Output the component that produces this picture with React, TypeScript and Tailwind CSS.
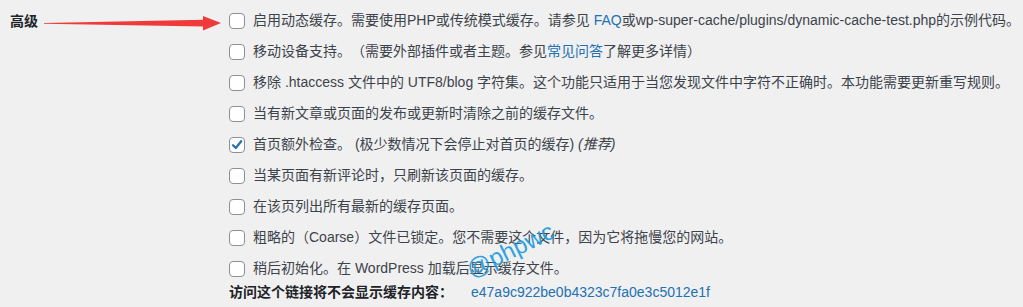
import React from "react";

const font = { fontFamily: '"Liberation Sans", "Noto Sans CJK SC", sans-serif' };

function Box({ checked = false }: { checked?: boolean }) {
  return (
    <span className="mr-2 flex h-4 w-4 shrink-0 items-center justify-center rounded-[4px] border border-[#8c8f94] bg-white">
      {checked && (
        <svg width="14" height="14" viewBox="0 0 14 14">
          <path d="M3 7.2 L5.8 10 L11.2 3.2" fill="none" stroke="#2271b1" strokeWidth="2.2" strokeLinecap="round" strokeLinejoin="round" />
        </svg>
      )}
    </span>
  );
}

function Row({ checked, children }: { checked?: boolean; children: React.ReactNode }) {
  return (
    <div className="flex h-[31px] items-center">
      <Box checked={checked} />
      <span className="whitespace-nowrap">{children}</span>
    </div>
  );
}

const A = ({ children }: { children: React.ReactNode }) => (
  <span className="text-[#2271b1]">{children}</span>
);

export default function App() {
  return (
    <div
      className="relative h-[307px] w-[1023px] overflow-hidden bg-[#f0f0f1] text-[14px] text-[#3c434a] [text-spacing-trim:space-all]"
      style={font}
    >
      <div className="flex">
        <div className="w-[229px] shrink-0 pl-[10px] pt-[12px] text-[14px] font-bold leading-[18px] text-[#1d2327]">高级</div>
        <div className="flex flex-col pt-[5px]">
          <Row>
            启用动态缓存。需要使用PHP或传统模式缓存。请参见 <A>FAQ</A>或wp-super-cache/plugins/dynamic-cache-test.php的示例代码。
          </Row>
          <Row>
            移动设备支持。（需要外部插件或者主题。参见<A>常见问答</A>了解更多详情）
          </Row>
          <Row>移除 .htaccess 文件中的 UTF8/blog 字符集。这个功能只适用于当您发现文件中字符不正确时。本功能需要更新重写规则。</Row>
          <Row>当有新文章或页面的发布或更新时清除之前的缓存文件。</Row>
          <Row checked>
            首页额外检查。 (极少数情况下会停止对首页的缓存) <em>(推荐)</em>
          </Row>
          <Row>当某页面有新评论时，只刷新该页面的缓存。</Row>
          <Row>在该页列出所有最新的缓存页面。</Row>
          <Row>粗略的（Coarse）文件已锁定。您不需要这个文件，因为它将拖慢您的网站。</Row>
          <Row>稍后初始化。在 WordPress 加载后显示缓存文件。</Row>
          <div className="flex h-[17px] items-center whitespace-nowrap">
            <span className="font-bold text-[#1d2327]">访问这个链接将不会显示缓存内容：</span>
            <span className="ml-[18px] text-[#2271b1]">e47a9c922be0b4323c7fa0e3c5012e1f</span>
          </div>
        </div>
      </div>

      <svg className="absolute left-0 top-0" width="230" height="40" viewBox="0 0 230 40">
        <polygon points="44,23 204,19.8 204,26.6 44,23.8" fill="#f03a3a" />
        <polygon points="203,16 221,23 203,30.5" fill="#f03a3a" />
      </svg>

      <span
        className="pointer-events-none absolute left-[468px] top-[259px] origin-left text-[24px] leading-none text-[#1b9ae0] opacity-90"
        style={{ ...font, transform: "rotate(-26deg)" }}
      >
        @phpwc
      </span>
    </div>
  );
}
